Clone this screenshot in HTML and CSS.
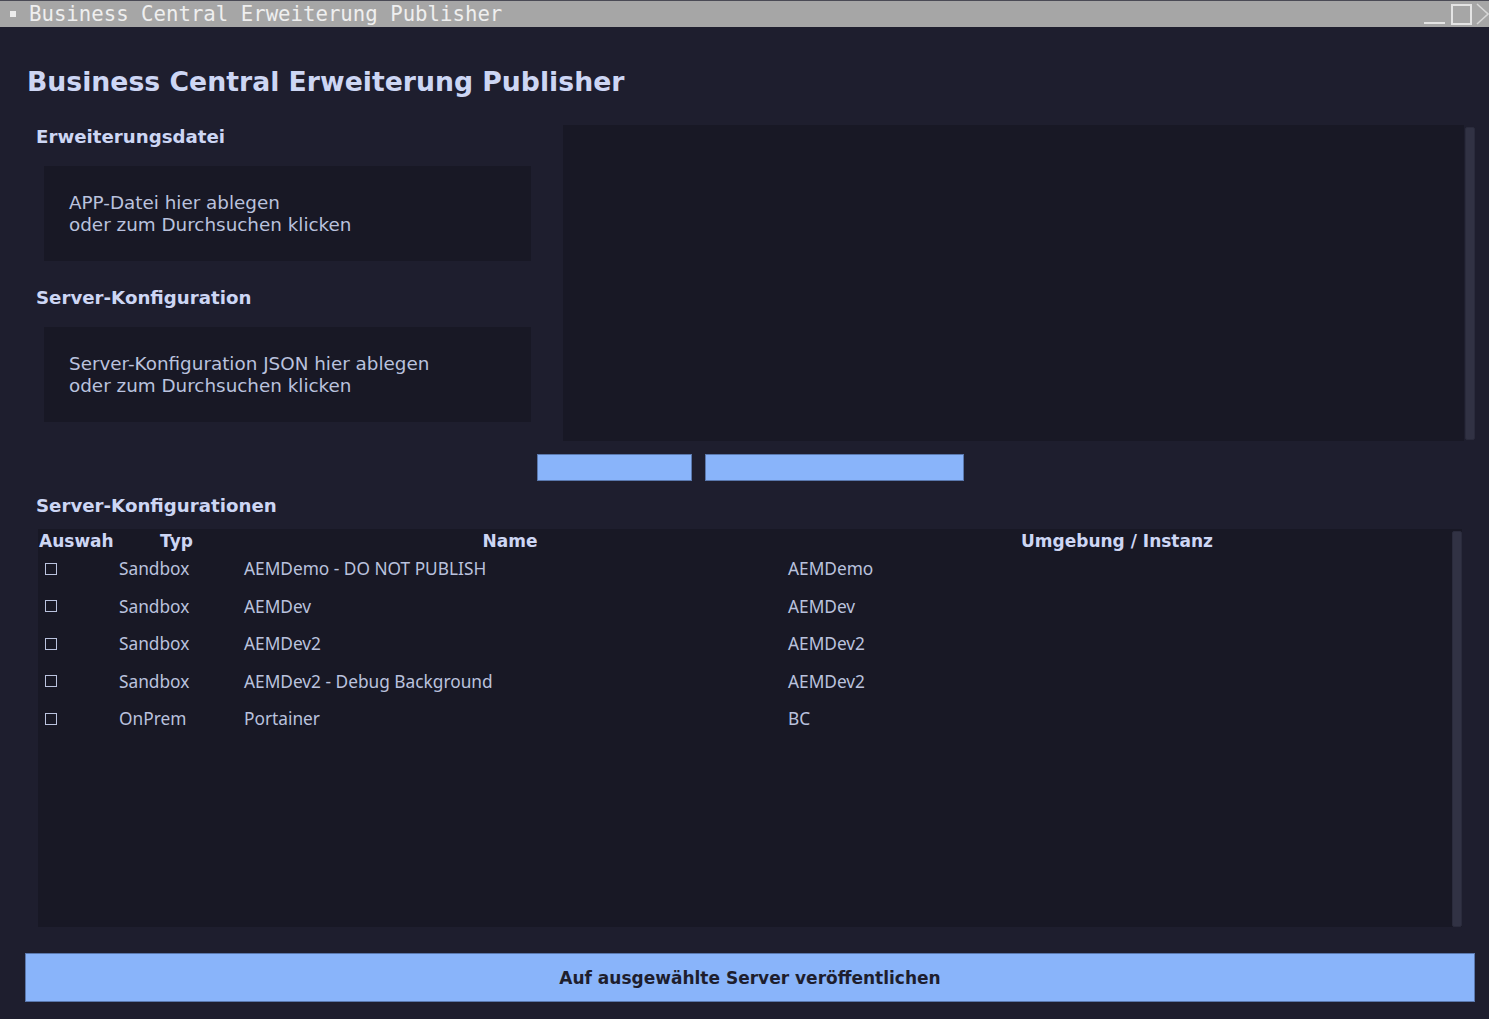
FILE: index.html
```
<!DOCTYPE html>
<html lang="de">
<head>
<meta charset="utf-8">
<title>Business Central Erweiterung Publisher</title>
<link rel="stylesheet" href="styles.css">
</head>
<body>
<div class="titlebar">
  <span class="tb-dot"></span>
  <span class="tb-title">Business Central Erweiterung Publisher</span>
  <div class="tb-controls">
    <span class="tb-min"></span>
    <span class="tb-max"></span>
    <svg class="tb-close" width="13" height="22" viewBox="0 0 13 22"><path d="M1 1 L12 11 L1 21" fill="none" stroke="#d6d6d6" stroke-width="1.6"/></svg>
  </div>
</div>
<main class="app">
  <h1 class="app-title">Business Central Erweiterung Publisher</h1>
  <section class="upper">
    <div class="left-col">
      <h2 class="section-label">Erweiterungsdatei</h2>
      <div class="dropzone">
        <p>APP-Datei hier ablegen<br>oder zum Durchsuchen klicken</p>
      </div>
      <h2 class="section-label second">Server-Konfiguration</h2>
      <div class="dropzone">
        <p>Server-Konfiguration JSON hier ablegen<br>oder zum Durchsuchen klicken</p>
      </div>
    </div>
    <div class="log-panel">
      <div class="log-area"></div>
      <div class="scrollbar"><span class="thumb"></span></div>
    </div>
  </section>
  <div class="btn-row">
    <button class="btn small-a"></button>
    <button class="btn small-b"></button>
  </div>
  <h2 class="section-label table-label">Server-Konfigurationen</h2>
  <div class="table-wrap">
    <div class="table">
      <div class="row head">
        <span class="c-sel">Auswah</span>
        <span class="c-typ">Typ</span>
        <span class="c-name">Name</span>
        <span class="c-env">Umgebung / Instanz</span>
      </div>
      <div class="row"><span class="c-sel"><i class="cb"></i></span><span class="c-typ">Sandbox</span><span class="c-name">AEMDemo - DO NOT PUBLISH</span><span class="c-env">AEMDemo</span></div>
      <div class="row"><span class="c-sel"><i class="cb"></i></span><span class="c-typ">Sandbox</span><span class="c-name">AEMDev</span><span class="c-env">AEMDev</span></div>
      <div class="row"><span class="c-sel"><i class="cb"></i></span><span class="c-typ">Sandbox</span><span class="c-name">AEMDev2</span><span class="c-env">AEMDev2</span></div>
      <div class="row"><span class="c-sel"><i class="cb"></i></span><span class="c-typ">Sandbox</span><span class="c-name">AEMDev2 - Debug Background</span><span class="c-env">AEMDev2</span></div>
      <div class="row"><span class="c-sel"><i class="cb"></i></span><span class="c-typ">OnPrem</span><span class="c-name">Portainer</span><span class="c-env">BC</span></div>
    </div>
    <div class="scrollbar tbl"><span class="thumb"></span></div>
  </div>
  <button class="publish">Auf ausgewählte Server veröffentlichen</button>
</main>
</body>
</html>
```
FILE: styles.css
```
* { box-sizing: border-box; }
html, body { margin: 0; padding: 0; }
body {
  background: #1e1e2e;
  width: 1489px;
  height: 1019px;
  overflow: hidden;
  font-family: "DejaVu Sans", sans-serif;
  color: #cdd6f4;
}
.titlebar {
  height: 27px;
  background: #a6a6a6;
  border-top: 1px solid #4a4a55;
  display: flex;
  align-items: center;
  position: relative;
}
.tb-dot {
  width: 6px; height: 6px;
  background: #ededed;
  margin-left: 10px;
  margin-right: 13px;
}
.tb-title {
  font-family: "DejaVu Sans Mono", monospace;
  font-size: 20.7px;
  color: #efefef;
  line-height: 26px;
}
.tb-controls {
  margin-left: auto;
  display: flex;
  align-items: flex-end;
  height: 26px;
}
.tb-min {
  width: 21px; height: 2px;
  background: #e4e4e4;
  margin-bottom: 3px;
  margin-right: 6px;
}
.tb-max {
  width: 21px; height: 21px;
  border: 2px solid #e4e4e4;
  margin-bottom: 2px;
  margin-right: 4px;
}
.tb-close { margin-bottom: 2px; }

.app {
  padding: 0 14px 0 25px;
}
.app-title {
  margin: 38px 0 0 2px;
  font-size: 26.7px;
  line-height: 34px;
  font-weight: bold;
  color: #cdd6f4;
}
.upper {
  display: flex;
  margin-top: 26px;
  height: 316px;
}
.left-col {
  width: 506px;
  flex: none;
}
.section-label {
  margin: 0;
  padding: 1px 0 0 11px;
  height: 23px;
  font-size: 18.2px;
  line-height: 22px;
  font-weight: bold;
  color: #cdd6f4;
}
.section-label.second { margin-top: 25px; }
.dropzone {
  margin: 18px 0 0 19px;
  width: 487px;
  height: 95px;
  background: #181825;
  display: flex;
  align-items: center;
  padding-left: 25px;
}
.dropzone p {
  margin: 0;
  padding-top: 1px;
  font-size: 18.35px;
  line-height: 22px;
  color: #bac2de;
}
.log-panel {
  margin-left: 32px;
  flex: 1;
  display: flex;
}
.log-area {
  flex: 1;
  background: #181825;
}
.scrollbar {
  width: 11px;
  display: flex;
  justify-content: center;
  padding: 2px 0 1px 0;
  background: #1e1e2e;
}
.thumb {
  width: 10px;
  background: #313244;
  border: 1px solid #2a2b3c;
  border-radius: 2px;
}
.btn-row {
  margin-top: 13px;
  display: flex;
  justify-content: center;
  gap: 13px;
}
.btn {
  height: 27px;
  background: #89b4fa;
  border: 1px solid #5a78ad;
  padding: 0;
}
.btn.small-a { width: 155px; }
.btn.small-b { width: 259px; }
.table-label { margin-top: 13px; }
.table-wrap {
  margin: 12px 0 0 13px;
  width: 1424px;
  height: 398px;
  display: flex;
  background: #181825;
}
.table { flex: 1; }
.table-wrap .scrollbar.tbl {
  width: 10px;
  background: #181825;
  padding: 2px 0 0 0;
}
.row {
  display: grid;
  grid-template-columns: 77px 123px 544px 1fr;
  height: 37.5px;
  align-items: center;
  font-family: "Noto Sans", sans-serif;
  font-size: 17.3px;
  color: #bac2de;
}
.row span { white-space: nowrap; overflow: hidden; }
.row.head {
  height: 21px;
  padding-top: 1.5px;
  align-items: start;
  font-family: "DejaVu Sans", sans-serif;
  font-weight: bold;
  font-size: 17px;
  color: #cdd6f4;
  line-height: 20px;
}
.row.head span { text-align: center; }
.row.head .c-sel { text-align: left; padding-left: 1px; }
.row.head .c-typ { padding-left: 0; }
.row.head .c-name { padding-left: 0; }
.row.head .c-env { padding-left: 0; }
.c-typ { padding-left: 4px; }
.c-name { padding-left: 6px; }
.c-env { padding-left: 6px; }
.cb {
  display: block;
  width: 12px; height: 12px;
  margin-left: 7px;
  border: 1.5px solid #bac2de;
}
.publish {
  display: block;
  margin-top: 26px;
  width: 1450px;
  height: 49px;
  background: #89b4fa;
  border: 1px solid #5a78ad;
  font-family: "DejaVu Sans", sans-serif;
  font-weight: bold;
  font-size: 17px;
  color: #1e1e2e;
}
```
